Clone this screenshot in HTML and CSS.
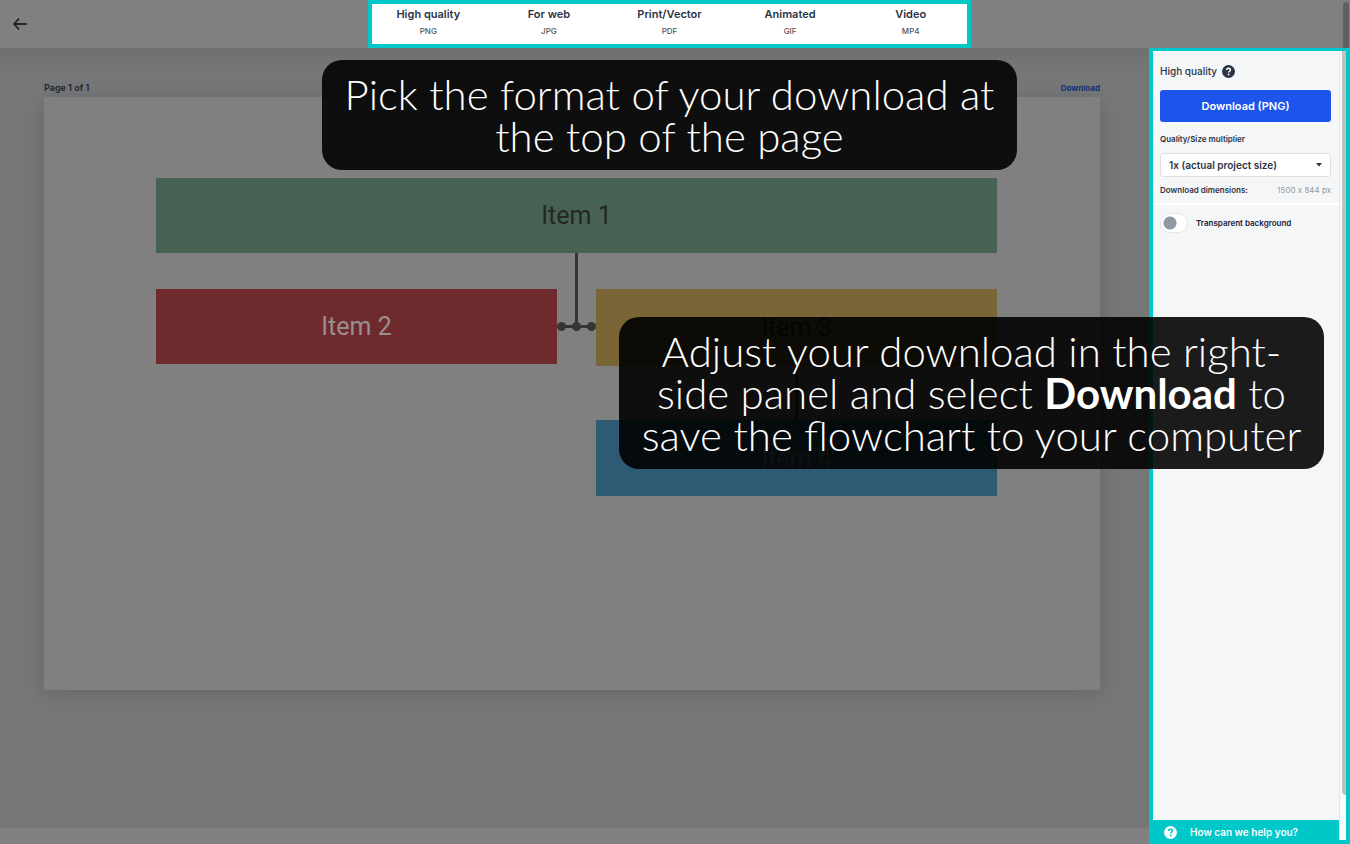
FILE: index.html
```html
<!DOCTYPE html>
<html lang="en">
<head>
    <meta charset="UTF-8">
    <meta name="viewport" content="width=device-width, initial-scale=1.0">
    <title>Download</title>
    <link rel="stylesheet" href="styles.css">
</head>
<body>
    <header class="topbar">
        <button class="back" type="button" aria-label="Back">
            <svg width="14" height="12" viewBox="0 0 14 12" fill="none" stroke="#20242d" stroke-width="1.8" stroke-linecap="round" stroke-linejoin="round">
                <path d="M13 6H1.500M5.500 1.200L1 6l4.500 4.800"/>
            </svg>
        </button>
        <nav class="formats">
            <button class="format active" type="button">High quality<small>PNG</small></button>
            <button class="format" type="button">For web<small>JPG</small></button>
            <button class="format" type="button">Print/Vector<small>PDF</small></button>
            <button class="format" type="button">Animated<small>GIF</small></button>
            <button class="format" type="button">Video<small>MP4</small></button>
        </nav>
        <div class="rail"><div class="thumb"></div></div>
    </header>

    <div class="layout">
        <main class="workspace">
            <div class="page-head">
                <span>Page 1 of 1</span>
                <a href="#">Download</a>
            </div>
            <section class="sheet">
                <div class="chart">
                    <div class="item item-1">Item 1</div>
                    <div class="item item-2">Item 2</div>
                    <svg class="link-top" width="39" height="111" viewBox="0 0 39 111" fill="#353535" stroke="#353535">
                        <path d="M19.500 0V73.500M4 73.500H35" stroke-width="3"/>
                        <circle cx="4.500" cy="73.500" r="4.500" stroke="none"/>
                        <circle cx="19.500" cy="73.500" r="4.500" stroke="none"/>
                        <circle cx="34.500" cy="73.500" r="4.500" stroke="none"/>
                    </svg>
                    <div class="item item-3">Item 3</div>
                    <div class="link-bottom"></div>
                    <div class="item item-4">Item 4</div>
                </div>
            </section>
        </main>

        <aside class="panel">
            <div class="panel-body">
                <div class="options">
                    <h2>High quality
                        <svg width="13" height="13" viewBox="0 0 13 13">
                            <circle cx="6.500" cy="6.500" r="6.500" fill="#2b3446"/>
                            <path d="M4.600 5.100C4.600 3.900 5.400 3.200 6.500 3.200s1.900.7 1.900 1.700c0 1.300-1.800 1.400-1.800 2.700" fill="none" stroke="#fff" stroke-width="1.500"/>
                            <circle cx="6.600" cy="9.500" r=".9" fill="#fff"/>
                        </svg>
                    </h2>
                    <button class="download" type="button">Download (PNG)</button>
                    <label class="field-label" for="multiplier">Quality/Size multiplier</label>
                    <select id="multiplier">
                        <option>1x (actual project size)</option>
                    </select>
                    <p class="dimensions"><b>Download dimensions:</b><span>1500 x 844 px</span></p>
                </div>
                <label class="toggle">
                    <input type="checkbox">
                    Transparent background
                </label>
                <button class="help" type="button">
                    <svg width="13" height="13" viewBox="0 0 13 13">
                        <circle cx="6.500" cy="6.500" r="6.500" fill="#fff"/>
                        <path d="M4.600 5.100C4.600 3.900 5.400 3.200 6.500 3.200s1.900.7 1.900 1.700c0 1.300-1.800 1.400-1.800 2.700" fill="none" stroke="#00c8c8" stroke-width="1.500"/>
                        <circle cx="6.600" cy="9.500" r=".9" fill="#00c8c8"/>
                    </svg>
                    How can we help you?
                </button>
            </div>
            <div class="rail rail-light"><div class="thumb"></div></div>
        </aside>
    </div>

    <div class="callout callout-top">Pick the format of your download at<br>the top of the page</div>
    <div class="callout callout-side">Adjust your download in the right-<br>side panel and select <b>Download</b> to<br>save the flowchart to your computer</div>
</body>
</html>
```
FILE: styles.css
```css
* {
    box-sizing: border-box;
}
body {
    margin: 0;
    height: 100vh;
    display: flex;
    flex-direction: column;
    position: relative;
    overflow: hidden;
    background: #808080;
    color: #2b3446;
    font-family: Inter, sans-serif;
    font-feature-settings: "calt" 0;
}
button {
    border: 0;
    padding: 0;
    background: none;
    font-family: inherit;
    color: inherit;
    cursor: pointer;
}
.topbar {
    height: 48px;
    flex: none;
    display: grid;
    grid-template-columns: 1fr auto 1fr 11px;
    background: #808080;
}
.back {
    justify-self: start;
    padding: 0 13px;
    display: flex;
    align-items: center;
}
.formats {
    display: flex;
    width: 603px;
    background: #fff;
    box-shadow: inset 0 0 0 4px #00c8c8;
}
.format {
    flex: 1;
    padding: 8px 0 0;
    display: flex;
    flex-direction: column;
    align-items: center;
    gap: 4px;
    font-size: 11px;
    line-height: 13px;
    font-weight: 600;
}
.format small {
    font-size: 8px;
    line-height: 12px;
    font-weight: 500;
    color: #555;
}
.rail {
    width: 11px;
    padding: 2px 1px 0 3px;
    border-left: 1px solid #7a7a7a;
}
.topbar .rail {
    grid-column: 4;
}
.rail .thumb {
    height: 100%;
    background: #606060;
    border-radius: 4px 4px 0 0;
}
.layout {
    flex: 1;
    min-height: 0;
    display: flex;
}
.workspace {
    flex: 1;
    margin-bottom: 16px;
    padding: 34px 49px 0 44px;
    background: linear-gradient(#6f7072, #767779 24px);
}
.page-head {
    display: flex;
    justify-content: space-between;
    font-size: 8px;
    line-height: 12px;
    font-weight: 700;
    color: #20242d;
    padding-bottom: 3px;
}
.page-head span {
    font-size: 9px;
    font-weight: 600;
}
.page-head a {
    color: #132d78;
    text-decoration: none;
}
.sheet {
    aspect-ratio: 1056 / 593;
    padding: 81px 103px 0 112px;
    background: #808080;
    box-shadow: 0 4px 20px rgba(0, 0, 0, 0.15);
}

/* flowchart */
.chart {
    display: grid;
    grid-template-columns: 1fr 39px 1fr;
    grid-template-rows: 75px 36px 77px 54px 76px;
    font-family: Roboto, sans-serif;
    font-size: 25px;
}
.item {
    display: flex;
    align-items: center;
    justify-content: center;
    color: #242725;
}
.item-1 {
    grid-area: 1 / 1 / 2 / 4;
    background: #476153;
}
.item-2 {
    grid-area: 3 / 1;
    height: 75px;
    background: #6f2a2d;
    color: #989090;
}
.item-3 {
    grid-area: 3 / 3;
    background: #796535;
}
.item-4 {
    grid-area: 5 / 3;
    background: #2e5b73;
    color: #908f8f;
}
.link-top {
    grid-area: 2 / 2 / 4 / 3;
}
.link-bottom {
    grid-area: 4 / 3;
    justify-self: center;
    width: 3px;
    background: #353535;
}

/* right panel */
.panel {
    width: 201px;
    display: flex;
    background: #f5f6f8;
    border: 4px solid #00c8c8;
    border-top-width: 3px;
}
.panel-body {
    flex: 1;
    display: flex;
    flex-direction: column;
}
.options {
    padding: 12px 8px 7px 7px;
    border-bottom: 2px solid #fff;
}
.panel h2 {
    display: flex;
    align-items: center;
    gap: 5px;
    margin: 0 0 11px;
    font-size: 10px;
    line-height: 16px;
    font-weight: 500;
}
.download {
    width: 100%;
    height: 32px;
    border-radius: 3px;
    background: #1d54eb;
    color: #fff;
    font-size: 11px;
    font-weight: 600;
}
.field-label {
    display: block;
    margin: 11px 0 8px;
    font-size: 8px;
    line-height: 12px;
    font-weight: 600;
}
select {
    width: 100%;
    height: 24px;
    padding: 0 8px;
    border: 1px solid #dddfe3;
    border-radius: 3px;
    appearance: none;
    background: #fff url("data:image/svg+xml,%3Csvg xmlns='http://www.w3.org/2000/svg' width='6' height='4'%3E%3Cpath d='M0 0h6L3 3.500z' fill='%232b3446'/%3E%3C/svg%3E") no-repeat right 8px center;
    color: #2b3446;
    font: 600 10px Inter, sans-serif;
}
.dimensions {
    display: flex;
    justify-content: space-between;
    margin: 7px 0 0;
    font-size: 8px;
    line-height: 12px;
}
.dimensions b {
    font-weight: 600;
}
.dimensions span {
    color: #9398a1;
}
.toggle {
    display: flex;
    align-items: center;
    gap: 8px;
    padding: 8px 7px;
    font-size: 8px;
    font-weight: 600;
    color: #17203a;
}
.toggle input {
    appearance: none;
    width: 28px;
    height: 20px;
    margin: 0;
    border: 1px solid #e3e5e8;
    border-radius: 10px;
    background: #fff radial-gradient(circle at 9px 9px, #8f98a3 6px, transparent 7px);
}
.help {
    margin-top: auto;
    height: 20px;
    padding: 4px 11px 0;
    display: flex;
    align-items: center;
    gap: 13px;
    background: #00c8c8;
    color: #fff;
    font-size: 10px;
    font-weight: 600;
}
.rail-light {
    width: 7px;
    padding: 0 0 45px 2px;
    background: #fafafa;
    border-color: #e6e6e6;
}
.rail-light .thumb {
    background: #c1c1c1;
    border-radius: 0 0 0 4px;
}

.callout {
    position: absolute;
    padding: 13px 0;
    border-radius: 20px;
    background: rgba(0, 0, 0, 0.89);
    color: #fff;
    font: 300 42px/42px Lato, sans-serif;
    text-align: center;
}
.callout-top {
    top: 60px;
    left: calc(50% - 353px);
    width: 695px;
}
.callout-side {
    top: 317px;
    right: 26px;
    width: 705px;
}
.callout b {
    font-weight: 700;
}
```
